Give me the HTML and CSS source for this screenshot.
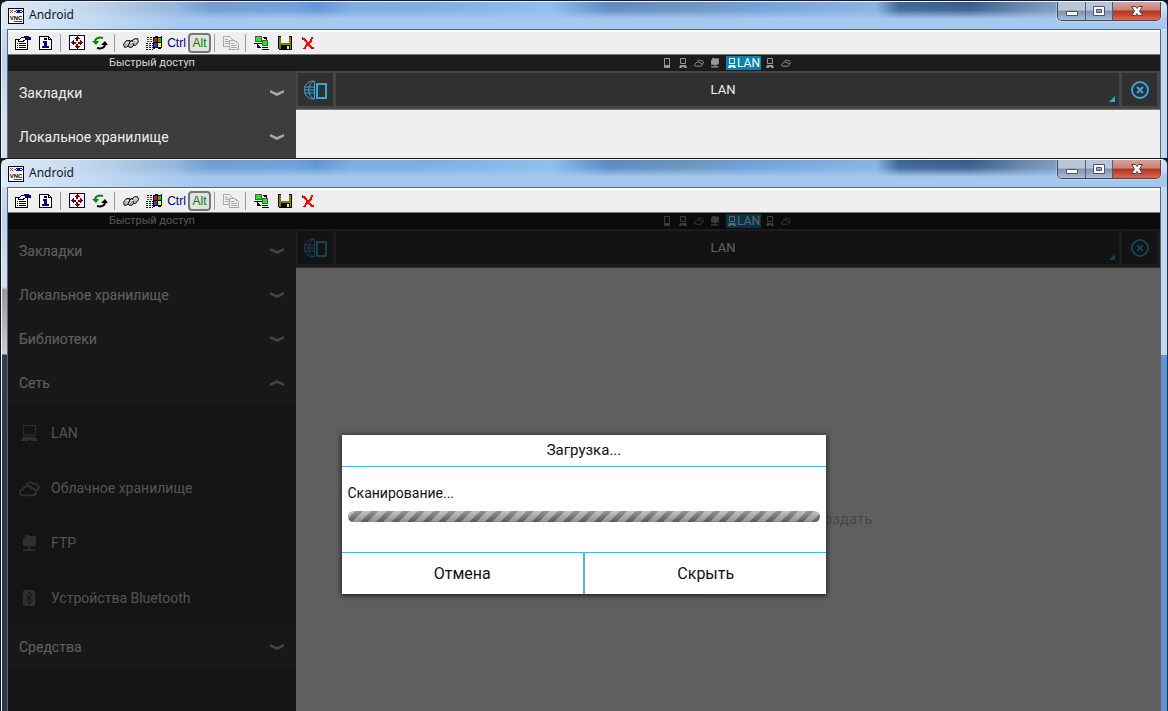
FILE: index.html
```html
<!DOCTYPE html>
<html lang="ru">
<head>
<meta charset="utf-8">
<title>Android</title>
<link rel="stylesheet" href="styles.css">
</head>
<body>
<svg class="sprite" aria-hidden="true">
  <symbol id="i-vnc" viewBox="0 0 16 16"><path fill="#fff" stroke="#000" d="M.5.5h15v15H.5z"/><path stroke="#c33" d="M2 2l3 3M5 2L2 5M6 3h1"/><path fill="#fff" stroke="#112a8c" d="M7.500 3.500c2-2 5-2 7 0-2 2-5 2-7 0z"/><circle cx="11" cy="3.500" r="1.500" fill="#001a80"/><text x="8" y="12" text-anchor="middle" font-size="6" font-weight="700" fill="#000">VNC</text><path stroke="#f00" d="M6 13.500h8"/></symbol>
  <symbol id="i-props" viewBox="0 0 16 16"><path fill="#fff" stroke="#000" d="M.5 4.500h12v10H.5z"/><path stroke="#000" d="M2 8.500h1m1 0h7M2 10.500h1m1 0h7M2 12.500h1m1 0h7"/><path fill="#fff" stroke="#000" d="M3 6l4-4 3 1v2L7 7z"/><path fill="#000080" d="M9 1h5v1h2v3h-5V3H9z"/></symbol>
  <symbol id="i-info" viewBox="0 0 16 16"><path fill="#fff" stroke="#000" d="M1.500 1.500h9l3 3v10h-12zM10.500 1.500v3h3"/><path fill="#000080" d="M6 3h3v2H6zM5 6h4v5h2v2H4v-2h2V8H5z"/></symbol>
  <symbol id="i-full" viewBox="0 0 16 16"><path fill="#fff" stroke="#000080" d="M.5.500h15v14H.5z"/><path fill="#800000" d="M8 1l3 3H9v2H7V4H5zM8 14l3-3H9V9H7v2H5zM2 7.500l3-3v2h2v2H5v2zM14 7.500l-3-3v2H9v2h2v2z"/></symbol>
  <symbol id="i-refresh" viewBox="0 0 16 16"><path fill="none" stroke="#080" stroke-width="2" d="M3 7c0-4 4-5 8-4"/><path fill="#080" d="M0 6h7l-3 4z"/><path fill="none" stroke="#000" stroke-width="2" d="M13 9c0 4-4 5-8 4"/><path fill="#000" d="M9 10h7l-3-4z"/></symbol>
  <symbol id="i-keys" viewBox="0 0 17 16"><g fill="#bbb" stroke="#000"><path d="M.5 9.500l3-4h4l-1 5-3 2h-2z"/><path d="M5.500 10.500l3-5h3l1 3-3 4h-3z"/><path d="M9.500 5.500l3-2h3l1 3-3 4h-2z"/></g><path stroke="#fff" d="M3 7.500h3M8 7.500h3M12 5.500h3"/></symbol>
  <symbol id="i-win" viewBox="0 0 16 16"><path fill="#000" d="M7 2l3-1 3 1 3-1v12l-3 1-3-1-3 1z"/><path fill="#f00" d="M8 3h3v4H8z"/><path fill="#0c0" d="M12 3h3v4h-3z"/><path fill="#33f" d="M8 8h3v4H8z"/><path fill="#ff0" d="M12 8h3v4h-3z"/><path stroke="#f00" stroke-dasharray="2 1" d="M1 4.500h6M1 6.500h6"/><path stroke="#00f" stroke-dasharray="2 1" d="M0 10.500h7M0 12.500h7"/><path stroke="#000" stroke-dasharray="2 1" d="M1 2.500h6M0 8.500h7M0 14.500h7"/></symbol>
  <symbol id="i-copy" viewBox="0 0 16 16"><g fill="#eee" stroke="#aaa"><path d="M.5 1.500h6l3 3v7h-9z"/><path d="M6.500 5.500h5l4 3v6h-9z"/><path d="M2 4.500h3M2 6.500h4M2 8.500h4M8 8.500h3M8 10.500h6M8 12.500h6"/></g></symbol>
  <symbol id="i-pcs" viewBox="0 0 16 16"><path fill="#0f0" stroke="#555" d="M1.500 1.500h6v5h-6zM8.500 5.500h5v5h-5z"/><path stroke="#000" d="M0 8.500h8M8 12.500h6M3.500 9v3.500H7M9 2.500h3.500V5M8 14.500h7"/></symbol>
  <symbol id="i-save" viewBox="0 0 16 16"><path fill="#808000" stroke="#000" d="M1.500 1.500h13v13h-12l-1-1z"/><path fill="#f4f4f4" d="M4 1h8v7H4z"/><path fill="#000" d="M4 10h9v5H4z"/><path fill="#ddd" d="M10 11h2v3h-2z"/></symbol>
  <symbol id="i-x" viewBox="0 0 16 16"><path fill="none" stroke="#f00" stroke-width="2" d="M2 3l3 2 3 4 4 4h2M12 2l-1 4-4 4-3 4"/></symbol>
  <symbol id="i-globe" viewBox="0 0 24 20"><g fill="none" stroke="#33a8db"><path d="M10 1C-3 1-3 19 10 19M10 1C3 4 3 16 10 19M10.500 1v18M1 7h10M0 10h11M1 13h10"/><path fill="#303030" stroke-width="2" d="M13 4h9v14h-9z"/></g></symbol>
  <symbol id="i-close" viewBox="0 0 20 20"><circle cx="10" cy="10" r="8" fill="none" stroke="#33a8db" stroke-width="2"/><path stroke="#33a8db" stroke-width="2" d="M7 7l6 6m0-6l-6 6"/></symbol>
  <symbol id="i-chev" viewBox="0 0 14 8"><path fill="#aaa" d="M0 1l7 3 7-3v2.500L7 7 0 3.500z"/></symbol>
  <symbol id="i-phone" viewBox="0 0 10 10"><path fill="none" stroke="currentColor" d="M2.500.500h5v9h-5z"/><path fill="currentColor" d="M2 7h6v3H2z"/></symbol>
  <symbol id="i-pc" viewBox="0 0 10 10"><path fill="none" stroke="currentColor" d="M2.500.500h5v5h-5z"/><path fill="currentColor" d="M2 7h6l1 3H6V9H4v1H1z"/></symbol>
  <symbol id="i-laptop" viewBox="0 0 16 16"><path fill="none" stroke="currentColor" d="M2.500.500h11v9h-11z"/><path fill="currentColor" d="M2 11h12l2 4H9v-1H7v1H0z"/></symbol>
  <symbol id="i-cloud" viewBox="0 0 22 16"><g fill="none" stroke="currentColor" stroke-width="2"><path d="M4 15c-4 0-4-6 0-6 1-4 8-5 9-1 5-1 7 7 2 7z"/><path d="M8 4c1-2 4-4 7-1 5-1 7 4 5 6l-2 1"/></g></symbol>
  <symbol id="i-ftp" viewBox="0 0 16 18"><path fill="currentColor" d="M3 0h4l1 1h7v9l-2 2H1V3h2zM7 12h2v3h5v2H1v-2h6z"/></symbol>
  <symbol id="i-bt" viewBox="0 0 14 18"><rect width="13" height="17" rx="3" fill="currentColor"/><path fill="none" stroke="#262626" d="M3 5.500l7 6-3.500 3v-12l3.500 3-7 6"/></symbol>
</svg>

<main class="desktop">
<section class="window">
  <header class="titlebar">
    <svg class="i16"><use href="#i-vnc"/></svg><h1 class="title">Android</h1>
    <div class="caption">
      <button class="cap min" aria-label="Свернуть"><svg class="glyph" viewBox="0 0 14 12"><path fill="#fff" stroke="#4a5872" d="M1.500 6.500h11v4h-11z"/></svg></button>
      <button class="cap max" aria-label="Развернуть"><svg class="glyph" viewBox="0 0 14 12"><path fill="#fff" fill-rule="evenodd" stroke="#4a5872" d="M1.500 1.500h11v9h-11zM4.500 4.500v3h5v-3z"/></svg></button>
      <button class="cap shut" aria-label="Закрыть"><svg class="glyph" viewBox="0 0 14 12"><path fill="#fff" stroke="#57404e" d="M1.500 1.500h4L7 3.500l1.500-2h4L9.500 6l3 4.500h-4L7 8.500l-1.500 2h-4l3-4.500z"/></svg></button>
    </div>
  </header>
  <div class="client">
    <div class="toolbar">
      <button class="tool" aria-label="Параметры"><svg class="i16"><use href="#i-props"/></svg></button><button class="tool" aria-label="Сведения"><svg class="i16"><use href="#i-info"/></svg></button><i class="sep"></i>
      <button class="tool" aria-label="Полный экран"><svg class="i16"><use href="#i-full"/></svg></button><button class="tool" aria-label="Обновить"><svg class="i16 smooth"><use href="#i-refresh"/></svg></button><i class="sep"></i>
      <button class="tool" aria-label="Сочетание клавиш"><svg class="i16 smooth"><use href="#i-keys"/></svg></button><button class="tool" aria-label="Пуск"><svg class="i16"><use href="#i-win"/></svg></button><button class="tool ctrl">Ctrl</button><button class="tool alt" aria-pressed="true">Alt</button><i class="sep"></i>
      <button class="tool" aria-label="Копировать"><svg class="i16"><use href="#i-copy"/></svg></button><i class="sep"></i>
      <button class="tool" aria-label="Новое соединение"><svg class="i16"><use href="#i-pcs"/></svg></button><button class="tool" aria-label="Сохранить"><svg class="i16"><use href="#i-save"/></svg></button><button class="tool" aria-label="Отключить"><svg class="i16"><use href="#i-x"/></svg></button>
    </div>
    <div class="screen">
      <nav class="side">
        <h2 class="quick">Быстрый доступ</h2>
        <button class="group">Закладки<svg class="chev"><use href="#i-chev"/></svg></button>
        <button class="group">Локальное хранилище<svg class="chev"><use href="#i-chev"/></svg></button>
      </nav>
      <div class="pane">
        <div class="tabs">
          <span class="tab"><svg class="i10"><use href="#i-phone"/></svg></span><span class="tab"><svg class="i10"><use href="#i-pc"/></svg></span><span class="tab"><svg class="i10"><use href="#i-cloud"/></svg></span><span class="tab"><svg class="i10"><use href="#i-ftp"/></svg></span><span class="tab on"><svg class="i10"><use href="#i-pc"/></svg>LAN</span><span class="tab"><svg class="i10"><use href="#i-pc"/></svg></span><span class="tab"><svg class="i10"><use href="#i-cloud"/></svg></span>
        </div>
        <div class="address">
          <button class="key" aria-label="Устройства"><svg class="globe"><use href="#i-globe"/></svg></button>
          <button class="key place">LAN</button>
          <button class="key" aria-label="Закрыть вкладку"><svg class="close"><use href="#i-close"/></svg></button>
        </div>
        <div class="files"></div>
      </div>
    </div>
  </div>
</section>

<section class="window front">
  <header class="titlebar">
    <svg class="i16"><use href="#i-vnc"/></svg><h1 class="title">Android</h1>
    <div class="caption">
      <button class="cap min" aria-label="Свернуть"><svg class="glyph" viewBox="0 0 14 12"><path fill="#fff" stroke="#4a5872" d="M1.500 6.500h11v4h-11z"/></svg></button>
      <button class="cap max" aria-label="Развернуть"><svg class="glyph" viewBox="0 0 14 12"><path fill="#fff" fill-rule="evenodd" stroke="#4a5872" d="M1.500 1.500h11v9h-11zM4.500 4.500v3h5v-3z"/></svg></button>
      <button class="cap shut" aria-label="Закрыть"><svg class="glyph" viewBox="0 0 14 12"><path fill="#fff" stroke="#57404e" d="M1.500 1.500h4L7 3.500l1.500-2h4L9.500 6l3 4.500h-4L7 8.500l-1.500 2h-4l3-4.500z"/></svg></button>
    </div>
  </header>
  <div class="client">
    <div class="toolbar">
      <button class="tool" aria-label="Параметры"><svg class="i16"><use href="#i-props"/></svg></button><button class="tool" aria-label="Сведения"><svg class="i16"><use href="#i-info"/></svg></button><i class="sep"></i>
      <button class="tool" aria-label="Полный экран"><svg class="i16"><use href="#i-full"/></svg></button><button class="tool" aria-label="Обновить"><svg class="i16 smooth"><use href="#i-refresh"/></svg></button><i class="sep"></i>
      <button class="tool" aria-label="Сочетание клавиш"><svg class="i16 smooth"><use href="#i-keys"/></svg></button><button class="tool" aria-label="Пуск"><svg class="i16"><use href="#i-win"/></svg></button><button class="tool ctrl">Ctrl</button><button class="tool alt" aria-pressed="true">Alt</button><i class="sep"></i>
      <button class="tool" aria-label="Копировать"><svg class="i16"><use href="#i-copy"/></svg></button><i class="sep"></i>
      <button class="tool" aria-label="Новое соединение"><svg class="i16"><use href="#i-pcs"/></svg></button><button class="tool" aria-label="Сохранить"><svg class="i16"><use href="#i-save"/></svg></button><button class="tool" aria-label="Отключить"><svg class="i16"><use href="#i-x"/></svg></button>
    </div>
    <div class="screen">
      <nav class="side">
        <h2 class="quick">Быстрый доступ</h2>
        <button class="group">Закладки<svg class="chev"><use href="#i-chev"/></svg></button>
        <button class="group">Локальное хранилище<svg class="chev"><use href="#i-chev"/></svg></button>
        <button class="group">Библиотеки<svg class="chev"><use href="#i-chev"/></svg></button>
        <button class="group" aria-expanded="true">Сеть<svg class="chev up"><use href="#i-chev"/></svg></button>
        <button class="item"><svg class="mark"><use href="#i-laptop"/></svg>LAN</button>
        <button class="item"><svg class="mark"><use href="#i-cloud"/></svg>Облачное хранилище</button>
        <button class="item"><svg class="mark"><use href="#i-ftp"/></svg>FTP</button>
        <button class="item"><svg class="mark"><use href="#i-bt"/></svg>Устройства Bluetooth</button>
        <button class="group">Средства<svg class="chev"><use href="#i-chev"/></svg></button>
      </nav>
      <div class="pane">
        <div class="tabs">
          <span class="tab"><svg class="i10"><use href="#i-phone"/></svg></span><span class="tab"><svg class="i10"><use href="#i-pc"/></svg></span><span class="tab"><svg class="i10"><use href="#i-cloud"/></svg></span><span class="tab"><svg class="i10"><use href="#i-ftp"/></svg></span><span class="tab on"><svg class="i10"><use href="#i-pc"/></svg>LAN</span><span class="tab"><svg class="i10"><use href="#i-pc"/></svg></span><span class="tab"><svg class="i10"><use href="#i-cloud"/></svg></span>
        </div>
        <div class="address">
          <button class="key" aria-label="Устройства"><svg class="globe"><use href="#i-globe"/></svg></button>
          <button class="key place">LAN</button>
          <button class="key" aria-label="Закрыть вкладку"><svg class="close"><use href="#i-close"/></svg></button>
        </div>
        <div class="files"><p class="create">Создать</p></div>
      </div>
      <div class="shade">
        <div class="dialog" role="dialog" aria-labelledby="dlg-title">
          <h2 class="dlg-title" id="dlg-title">Загрузка...</h2>
          <div class="dlg-body">
            <label class="dlg-label" for="scan">Сканирование...</label>
            <progress class="bar" id="scan"></progress>
          </div>
          <div class="dlg-actions"><button class="act">Отмена</button><button class="act">Скрыть</button></div>
        </div>
      </div>
    </div>
  </div>
</section>
</main>
</body>
</html>
```
FILE: styles.css
```css
* { box-sizing: border-box; }
body { margin: 0; background: #10151f; font-family: Roboto, "Noto Sans", sans-serif; }
button { font: inherit; color: inherit; border: 0; padding: 0; margin: 0; background: none; }
h1, h2, p { margin: 0; font-weight: 400; }
svg { display: block; flex: none; }
.sprite { position: absolute; width: 0; height: 0; }
.i16 { width: 16px; height: 16px; shape-rendering: crispEdges; font-family: "Liberation Sans", sans-serif; }
.smooth { shape-rendering: auto; }
.i10 { width: 10px; height: 10px; }

.desktop { display: grid; grid-template-rows: 158px minmax(0, 1fr); height: 100vh; overflow: hidden; }
.window {
  display: flex; flex-direction: column; min-height: 0; overflow: hidden;
  padding: 0 6px 0 5px; margin-left: 1px;
  border-top: 1px solid #121a30; border-left: 1px solid #f2f8ff; border-right: 1px solid #223047;
  border-radius: 7px 7px 0 0;
  background:
    linear-gradient(90deg, transparent 50%, #c0d9f5 50%) 0 30px / 100% 100% no-repeat,
    linear-gradient(#d9e8f8, #b9d2ee 60px, #d3e2f2 120px, #cfe0f3);
}
.front {
  background:
    linear-gradient(90deg, transparent 50%, #c0d9f5 50%) 0 0 / 100% 196px no-repeat,
    linear-gradient(90deg, transparent 50%, #5f93d6 50%) 0 196px / 100% 100% no-repeat,
    linear-gradient(#d9e8f8, #b9d2ee 60px, #d3e2f2 128px, #999 131px, #ccc 195px, #2f3e50 196px, #2c3848 300px, #2c3848);
}
.titlebar {
  display: flex; align-items: center; flex: none; height: 28px; margin: 0 -6px 0 -5px; padding: 0 6px;
  border-top: 1px solid #eef6ff;
  background:
    linear-gradient(90deg, #dceafa 0, rgba(210,228,246,.8) 6%, rgba(165,200,238,0) 16%),
    linear-gradient(rgba(165,200,238,0) 0, rgba(165,200,238,.1) 8px, #a5c8ee 17px),
    linear-gradient(90deg, #a7c0da 0, #90b0d2 12%, #8bb2df 15%, #6f9ccf 18%, #6da0da 25%, #5f95d4 27%, #7cabe0 30%, #79ade2 36%, #8cc0ef 47%, #5a88c2 52%, #6b93bd 59%, #6f9fd8 64%, #7cabde 70%, #86b4e2 75%, #3c6496 77%, #355a89 83%, #7292b6 89%, #a9bdd6 96%, #d5e3f4 100%);
}
.title { margin: 0 0 2px 5px; font: 12px/16px "Noto Sans", sans-serif; color: #101820; flex: 1; }
.caption { display: flex; align-self: flex-start; border: 1px solid #3c4a62; border-top: 0; border-radius: 0 0 5px 5px; overflow: hidden; box-shadow: 0 0 2px #fff; }
.cap { display: grid; place-items: center; height: 18px; width: 28px; background: linear-gradient(#b9c6d8 0 45%, #8091ac 50%, #a9bdd8); border-right: 1px solid #4e5d76; }
.max { width: 27px; }
.shut { width: 47px; border-right: 0; background: linear-gradient(#d9a39b 0, #cf8072 45%, #b8301a 50%, #d96a50); }
.glyph { width: 14px; height: 12px; }

.client { display: flex; flex-direction: column; flex: 1; min-height: 0; border: 1px solid #5c6876; border-bottom: 0; }
.toolbar { display: flex; align-items: center; flex: none; height: 25px; padding-left: 3px; background: #efefef; border-top: 2px solid #fff; border-bottom: 1px solid #777; }
.tool { display: grid; place-items: center; width: 23px; height: 20px; font: 12px/16px "Liberation Sans", sans-serif; }
.ctrl { color: #000080; }
.alt { color: #008000; border: 2px solid #777; border-radius: 4px; background: #e2e2e2; }
.sep { width: 8px; height: 18px; background: linear-gradient(90deg, transparent 3px, #999 3px 4px, transparent 4px); }

.screen { position: relative; display: grid; grid-template-columns: 288px minmax(0, 1fr); flex: 1; min-height: 0; overflow: hidden; background: #eee; color: #eee; }
.side { display: flex; flex-direction: column; min-height: 0; overflow: hidden; background: #323232; }
.quick { flex: none; height: 16px; font-size: 11px; line-height: 16px; text-align: center; background: #1b1b1b; color: #d8d8d8; }
.group, .item { display: flex; align-items: center; flex: none; text-align: left; font-size: 14px; line-height: 20px; padding: 1px 12px 0 11px; }
.group { justify-content: space-between; height: 44px; background: #3d3d3d; border-bottom: 1px solid #393939; }
.item { height: 55px; padding-top: 2px; gap: 11px; color: #d0d0d0; border-bottom: 1px solid #3a3a3a; }
.mark { width: 21px; height: 17px; color: #777; }
.chev { width: 14px; height: 8px; }
.up { transform: rotate(180deg); }

.pane { display: flex; flex-direction: column; min-width: 0; }
.tabs { display: flex; justify-content: center; align-items: center; flex: none; height: 16px; padding-right: 3px; background: #1b1b1b; color: #999; font-size: 12px; line-height: 14px; }
.tab { display: flex; align-items: center; justify-content: center; width: 16px; height: 14px; }
.on { width: 35px; background: #0a82b0; color: #fff; margin: 0 1px 0 3px; }
.address { display: flex; gap: 3px; flex: none; height: 39px; padding: 2px 3px 3px 2px; background: #464646; border-bottom: 1px solid #777; }
.key { position: relative; display: grid; place-items: center; width: 35px; background: #303030; font-size: 13px; line-height: 16px; }
.place { flex: 1; padding: 1px 9px 0 0; }
.place::after { content: ""; position: absolute; right: 4px; bottom: 4px; border: 3px solid transparent; border-right-color: #33a8db; border-bottom-color: #33a8db; }
.globe { width: 24px; height: 20px; }
.close { width: 20px; height: 20px; }
.files { flex: 1; padding: 241px 33.3% 0 0; text-align: right; }
.create { color: #b4b4b4; font-size: 15px; line-height: 20px; }

.shade { position: absolute; inset: 0; display: flex; justify-content: center; align-items: flex-start; padding-top: 222px; background: rgba(0,0,0,.6); }
.dialog { width: 42.1%; background: #fff; color: #111; box-shadow: 0 1px 5px 1px #222; }
.dlg-title { height: 32px; font-size: 15px; line-height: 30px; text-align: center; border-bottom: 1px solid #4db8de; }
.dlg-body { display: flex; flex-direction: column; gap: 8px; height: 85px; padding: 16px 6px 0; }
.dlg-label { font-size: 14px; line-height: 20px; }
.bar {
  appearance: none; display: block; width: 100%; height: 11px; border: 0; border-radius: 6px; overflow: hidden;
  background: linear-gradient(rgba(255,255,255,.3), rgba(0,0,0,.15)), repeating-linear-gradient(135deg, #aaa 0 5px, #686868 6px 10px, #aaa 11px);
}
.bar::-webkit-progress-bar { background: transparent; }
.dlg-actions { display: flex; border-top: 1px solid #4db8de; }
.act { flex: 1; height: 41px; font-size: 16px; line-height: 20px; }
.act + .act { border-left: 2px solid #4db8de; }
```
